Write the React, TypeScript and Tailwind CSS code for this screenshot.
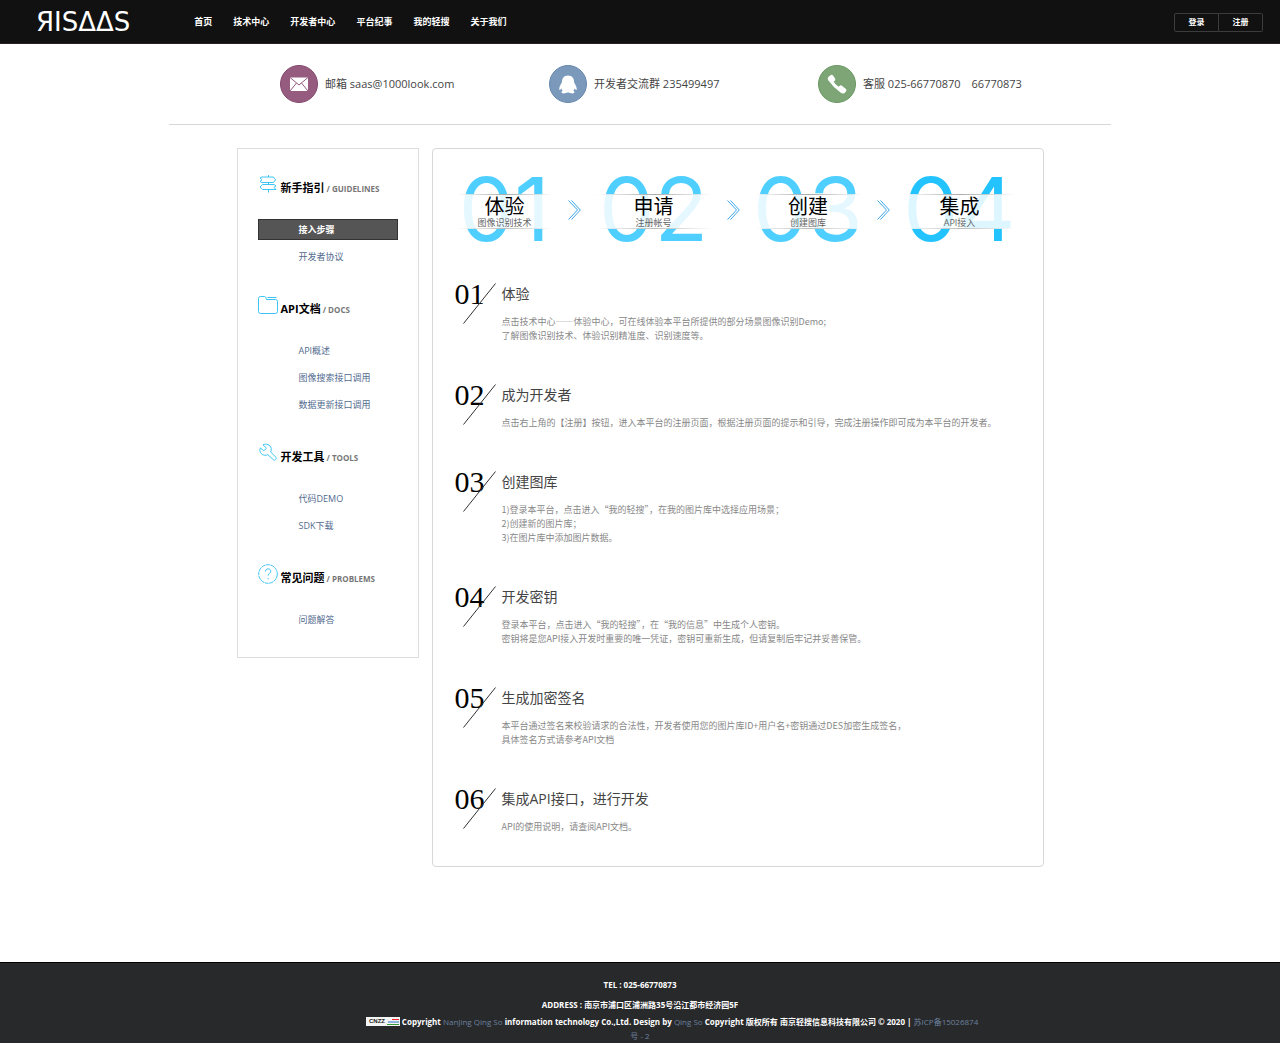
import type { ReactNode } from "react";
import clsx from "clsx";

type MenuSection = {
  title: string;
  label: string;
  icon: ReactNode;
  items: string[];
};

type Guide = {
  no: string;
  title: string;
  lines: string[];
};

const navItems = ["首页", "技术中心", "开发者中心", "平台纪事", "我的轻搜", "关于我们"];

const sections: MenuSection[] = [
  { title: "新手指引", label: "GUIDELINES", icon: <SignpostIcon />, items: ["接入步骤", "开发者协议"] },
  { title: "API文档", label: "DOCS", icon: <FolderIcon />, items: ["API概述", "图像搜索接口调用", "数据更新接口调用"] },
  { title: "开发工具", label: "TOOLS", icon: <WrenchIcon />, items: ["代码DEMO", "SDK下载"] },
  { title: "常见问题", label: "PROBLEMS", icon: <QuestionIcon />, items: ["问题解答"] },
];

const steps = [
  { no: "01", title: "体验", sub: "图像识别技术", width: "w-[96px]", color: "text-[#4fcfff]" },
  { no: "02", title: "申请", sub: "注册帐号", width: "w-[116px]", color: "text-[#4fcfff]" },
  { no: "03", title: "创建", sub: "创建图库", width: "w-[107px]", color: "text-[#4fcfff]" },
  { no: "04", title: "集成", sub: "API接入", width: "w-[110px]", color: "text-[#22c3ff]" },
];

const guides: Guide[] = [
  {
    no: "01",
    title: "体验",
    lines: [
      "点击技术中心——体验中心，可在线体验本平台所提供的部分场景图像识别Demo;",
      "了解图像识别技术、体验识别精准度、识别速度等。",
    ],
  },
  {
    no: "02",
    title: "成为开发者",
    lines: ["点击右上角的【注册】按钮，进入本平台的注册页面，根据注册页面的提示和引导，完成注册操作即可成为本平台的开发者。"],
  },
  {
    no: "03",
    title: "创建图库",
    lines: [
      "1)登录本平台，点击进入“我的轻搜”，在我的图片库中选择应用场景；",
      "2)创建新的图片库；",
      "3)在图片库中添加图片数据。",
    ],
  },
  {
    no: "04",
    title: "开发密钥",
    lines: [
      "登录本平台，点击进入“我的轻搜”，在“我的信息”中生成个人密钥。",
      "密钥将是您API接入开发时重要的唯一凭证，密钥可重新生成，但请复制后牢记并妥善保管。",
    ],
  },
  {
    no: "05",
    title: "生成加密签名",
    lines: [
      "本平台通过签名来校验请求的合法性，开发者使用您的图片库ID+用户名+密钥通过DES加密生成签名，",
      "具体签名方式请参考API文档",
    ],
  },
  { no: "06", title: "集成API接口，进行开发", lines: ["API的使用说明，请查阅API文档。"] },
];

function SignpostIcon() {
  return (
    <svg className="size-5" viewBox="0 0 20 20" fill="none" stroke="#3cc4f5" aria-hidden="true">
      <path d="M10.5 1v2M10.5 8.5v2M10.5 15.500v3M4 3h11.500l2 2.700-2 2.800H4L2 7.500l2-1.800L2 4zM4.500 10.500H16l2 1.500-2 1.500 2 2H4.500l-2.500-2.500z" />
    </svg>
  );
}

function FolderIcon() {
  return (
    <svg className="size-5" viewBox="0 0 20 20" fill="none" stroke="#3cc4f5" aria-hidden="true">
      <path d="M.500 3.500Q.500 1.500 2.500 1.500H6.500Q8 1.500 8.500 4.500H17.500Q19.500 4.500 19.500 6.500V16.500Q19.500 18.500 17.500 18.500H2.500Q.500 18.500.500 16.500zM9.500 2.500h9" />
    </svg>
  );
}

function WrenchIcon() {
  return (
    <svg className="size-5" viewBox="0 0 20 20" fill="none" stroke="#3cc4f5" strokeLinejoin="round" aria-hidden="true">
      <path d="M5 1.800C8 .300 12.500 1.500 13.200 5.500 13.400 6.900 13 8 12.700 9L18 14.300C19 15.700 17 18 15.500 16.800L9.800 11.700C6 13.500 1.500 10.800 1.800 6.500L2.500 5 5.800 7.800 8.500 5.200z" />
    </svg>
  );
}

function QuestionIcon() {
  return (
    <svg className="size-5" viewBox="0 0 20 20" fill="none" stroke="#3cc4f5" aria-hidden="true">
      <circle cx="10" cy="10" r="9.300" strokeDasharray="4 .600" />
      <path d="M7.500 7.500C7.500 3.800 12.700 4.200 12.700 7.200 12.700 9.200 10.200 9.200 10.200 11.700M10.200 14v1.300" />
    </svg>
  );
}

function MailIcon() {
  return (
    <svg className="size-[38px]" viewBox="0 0 38 38" aria-hidden="true">
      <circle cx="19" cy="19" r="18.500" fill="#955c80" stroke="#84476e" />
      <path d="M10 12.500h18v13.500H10z" fill="#fff" />
      <path d="m10 12.500 9 7.500 9-7.500M10 26l6.500-8M28 26l-6.500-8" fill="none" stroke="#955c80" />
    </svg>
  );
}

function GroupIcon() {
  return (
    <svg className="size-[38px]" viewBox="0 0 38 38" aria-hidden="true">
      <circle cx="19" cy="19" r="18.500" fill="#7a99bb" stroke="#6788ad" />
      <path
        d="M19 10.500c-4 0-6 2.800-6 6.300 0 1.500-2.800 4.200-2.800 7.200 0 1.400 1 1.300 2.300-.500.200 1 .600 1.700 1.200 2.300-1.700.700-1.700 2.600.8 2.600 2 0 3.200-.4 4.500-1.100 1.300.7 2.500 1.100 4.500 1.100 2.500 0 2.500-1.900.8-2.600.6-.6 1-1.300 1.200-2.300 1.300 1.800 2.300 1.900 2.300.5 0-3-2.800-5.700-2.800-7.200 0-3.500-2-6.300-6-6.300z"
        fill="#fff"
      />
    </svg>
  );
}

function PhoneIcon() {
  return (
    <svg className="size-[38px]" viewBox="0 0 38 38" aria-hidden="true">
      <circle cx="19" cy="19" r="18.500" fill="#7da576" stroke="#689761" />
      <path
        d="M10.300 12 12.500 10.200q1.500-1 2.700.5l1.900 2.800q.8 1.600-.7 2.600l-.6.700q1.500 2.800 4.700 5l.9-.9q1.400-1.200 2.800 0l3.500 2.900q1.500 1.300.3 2.700l-1.500 1.500q-1.500 1.300-4-.5-7.500-5.500-12.500-12.500-.8-1.800.3-3z"
        fill="#fff"
      />
    </svg>
  );
}

function DoubleChevron() {
  return (
    <svg className="h-[20px] w-[13px] shrink-0" viewBox="0 0 13 20" fill="none" stroke="#3ba4ea" aria-hidden="true">
      <path d="M.500.500 9.500 10 .500 19.500M3.500.500 12.300 10 3.500 19.500" />
    </svg>
  );
}

function StatBadge() {
  return (
    <svg className="ml-16 inline-block h-[9px] w-[34px] align-[-1px]" viewBox="0 0 34 9" role="img" aria-label="CNZZ">
      <path d="M0 0h34v9H0z" fill="#f4f4f4" />
      <text x="3" y="6" fontSize="6" fontWeight="700" fontFamily="Liberation Sans, sans-serif" fill="#222">
        CNZZ
      </text>
      <path d="M26 2.500h7" stroke="#e22" />
      <path d="M22 5h11" stroke="#27c" />
      <path d="M21 7.500h12" stroke="#393" />
    </svg>
  );
}

function Header() {
  return (
    <header className="flex h-[44px] items-center border-b border-[#2b2022] bg-[#111] pl-9 pr-[17px] pt-px">
      <a href="#" aria-label="AISAAS" className="font-['DejaVu_Sans',sans-serif] text-[26px] leading-[28px] text-white">
        ЯISΔΔS
      </a>
      <nav className="ml-16 flex gap-[21px] text-[9px] font-bold text-white">
        {navItems.map((item) => (
          <a key={item} href="#" className="whitespace-nowrap">
            {item}
          </a>
        ))}
      </nav>
      <div className="ml-auto flex text-[8px] font-bold text-white">
        <button type="button" className="h-[19px] w-[45px] rounded-l-[2px] border border-[#3c3c3c]">
          登录
        </button>
        <button type="button" className="h-[19px] w-[44px] rounded-r-[2px] border border-l-0 border-[#3c3c3c]">
          注册
        </button>
      </div>
    </header>
  );
}

function Contacts() {
  return (
    <section className="mx-auto grid w-full max-w-[942px] grid-cols-3 border-b border-[#d8d8d8] py-[21px] pl-[111px] pr-6 text-[11px] text-[#444]">
      <div className="flex items-center gap-[7px]">
        <MailIcon />
        <span>邮箱 saas@1000look.com</span>
      </div>
      <div className="flex items-center gap-[7px]">
        <GroupIcon />
        <span>开发者交流群 235499497</span>
      </div>
      <div className="flex items-center gap-[7px]">
        <PhoneIcon />
        <span>客服 025-66770870　66770873</span>
      </div>
    </section>
  );
}

function Sidebar() {
  return (
    <aside className="flex w-[182px] shrink-0 flex-col gap-[25px] border border-[#ddd] px-5 pb-6 pt-[25px]">
      {sections.map((section) => (
        <section key={section.label}>
          <div className="mb-[13px] flex gap-[3px]">
            {section.icon}
            <h2 className="whitespace-nowrap text-[11px] font-bold leading-[28px] text-black">
              {section.title}
              <span className="text-[8px] text-[#777]"> / {section.label}</span>
            </h2>
          </div>
          <ul className="text-[9px]">
            {section.items.map((item) => (
              <li key={item} className="py-[3px]">
                <a
                  href="#"
                  className={clsx(
                    "block border pl-10 leading-[19px]",
                    item === "接入步骤"
                      ? "border-[#333] bg-[#555] font-bold text-white"
                      : "border-transparent text-[#526b8e]",
                  )}
                >
                  {item}
                </a>
              </li>
            ))}
          </ul>
        </section>
      ))}
    </aside>
  );
}

function StepBanner() {
  return (
    <div className="flex items-center gap-[15px] pl-6">
      {steps.map((step, index) => (
        <div key={step.no} className="contents">
          {index > 0 && <DoubleChevron />}
          <div className={clsx("relative flex h-[67px] shrink-0 items-center justify-center", step.width)}>
            <span className={clsx("font-[Inter,sans-serif] text-[88px] leading-[67px]", step.color)}>{step.no}</span>
            <div className="absolute inset-x-0 top-[18px] flex h-[35px] flex-col bg-white/85 text-center">
              <div className="h-px bg-linear-to-r from-transparent via-[#aaa] to-transparent" />
              <p className="mt-px text-[20px] leading-[22px] text-black">{step.title}</p>
              <p className="text-[9px] leading-[9px] text-[#666]">{step.sub}</p>
              <div className="mt-auto h-px bg-linear-to-r from-transparent via-[#bbb] to-transparent" />
            </div>
          </div>
        </div>
      ))}
    </div>
  );
}

function GuideItem({ no, title, lines }: Guide) {
  return (
    <li className="flex">
      <div className="relative w-[47px] shrink-0">
        <span className="font-['Liberation_Serif',serif] text-[30px] leading-[20px] text-black">{no}</span>
        <svg className="absolute -top-px left-2 h-[41px] w-[33px]" viewBox="0 0 33 41" stroke="#333" aria-hidden="true">
          <path d="M.500 40.500 32.500.500" />
        </svg>
      </div>
      <div>
        <h3 className="mb-[11px] text-[14px] leading-[20px] text-[#444]">{title}</h3>
        {lines.map((line) => (
          <p key={line} className="font-['Noto_Sans_CJK_SC',sans-serif] text-[9px] leading-[14px] text-[#888]">
            {line}
          </p>
        ))}
      </div>
    </li>
  );
}

function Footer() {
  return (
    <footer className="mt-[95px] border-t border-black bg-[#28292b] px-4 pt-[15px] text-center text-[8px] font-bold leading-[14px] text-white">
      <p>TEL : 025-66770873</p>
      <p className="mt-[6px]">ADDRESS : 南京市浦口区浦洲路35号沿江都市经济园5F</p>
      <p className="mx-auto mt-[3px] max-w-[720px]">
        <StatBadge /> Copyright{" "}
        <a href="#" className="font-normal text-[#6d819f]">
          NanJing Qing So
        </a>{" "}
        information technology Co.,Ltd. Design by{" "}
        <a href="#" className="font-normal text-[#6d819f]">
          Qing So
        </a>{" "}
        Copyright 版权所有 南京轻搜信息科技有限公司 © 2020 |{" "}
        <a href="#" className="font-normal text-[#6d819f]">
          苏ICP备15026874
          <br />号 - 2
        </a>
      </p>
    </footer>
  );
}

export default function App() {
  return (
    <div lang="zh-CN" className="min-h-screen bg-white font-['Open_Sans','Noto_Sans_CJK_SC',sans-serif]">
      <Header />
      <Contacts />
      <main className="mx-auto mt-[23px] flex max-w-[807px] items-start gap-[13px]">
        <Sidebar />
        <article className="min-w-0 flex-1 rounded-[4px] border border-[#d8d8d8] pb-8 pt-[27px]">
          <StepBanner />
          <ol className="mt-[41px] flex flex-col gap-[42px] pl-[22px]">
            {guides.map((guide) => (
              <GuideItem key={guide.no} {...guide} />
            ))}
          </ol>
        </article>
      </main>
      <Footer />
    </div>
  );
}
